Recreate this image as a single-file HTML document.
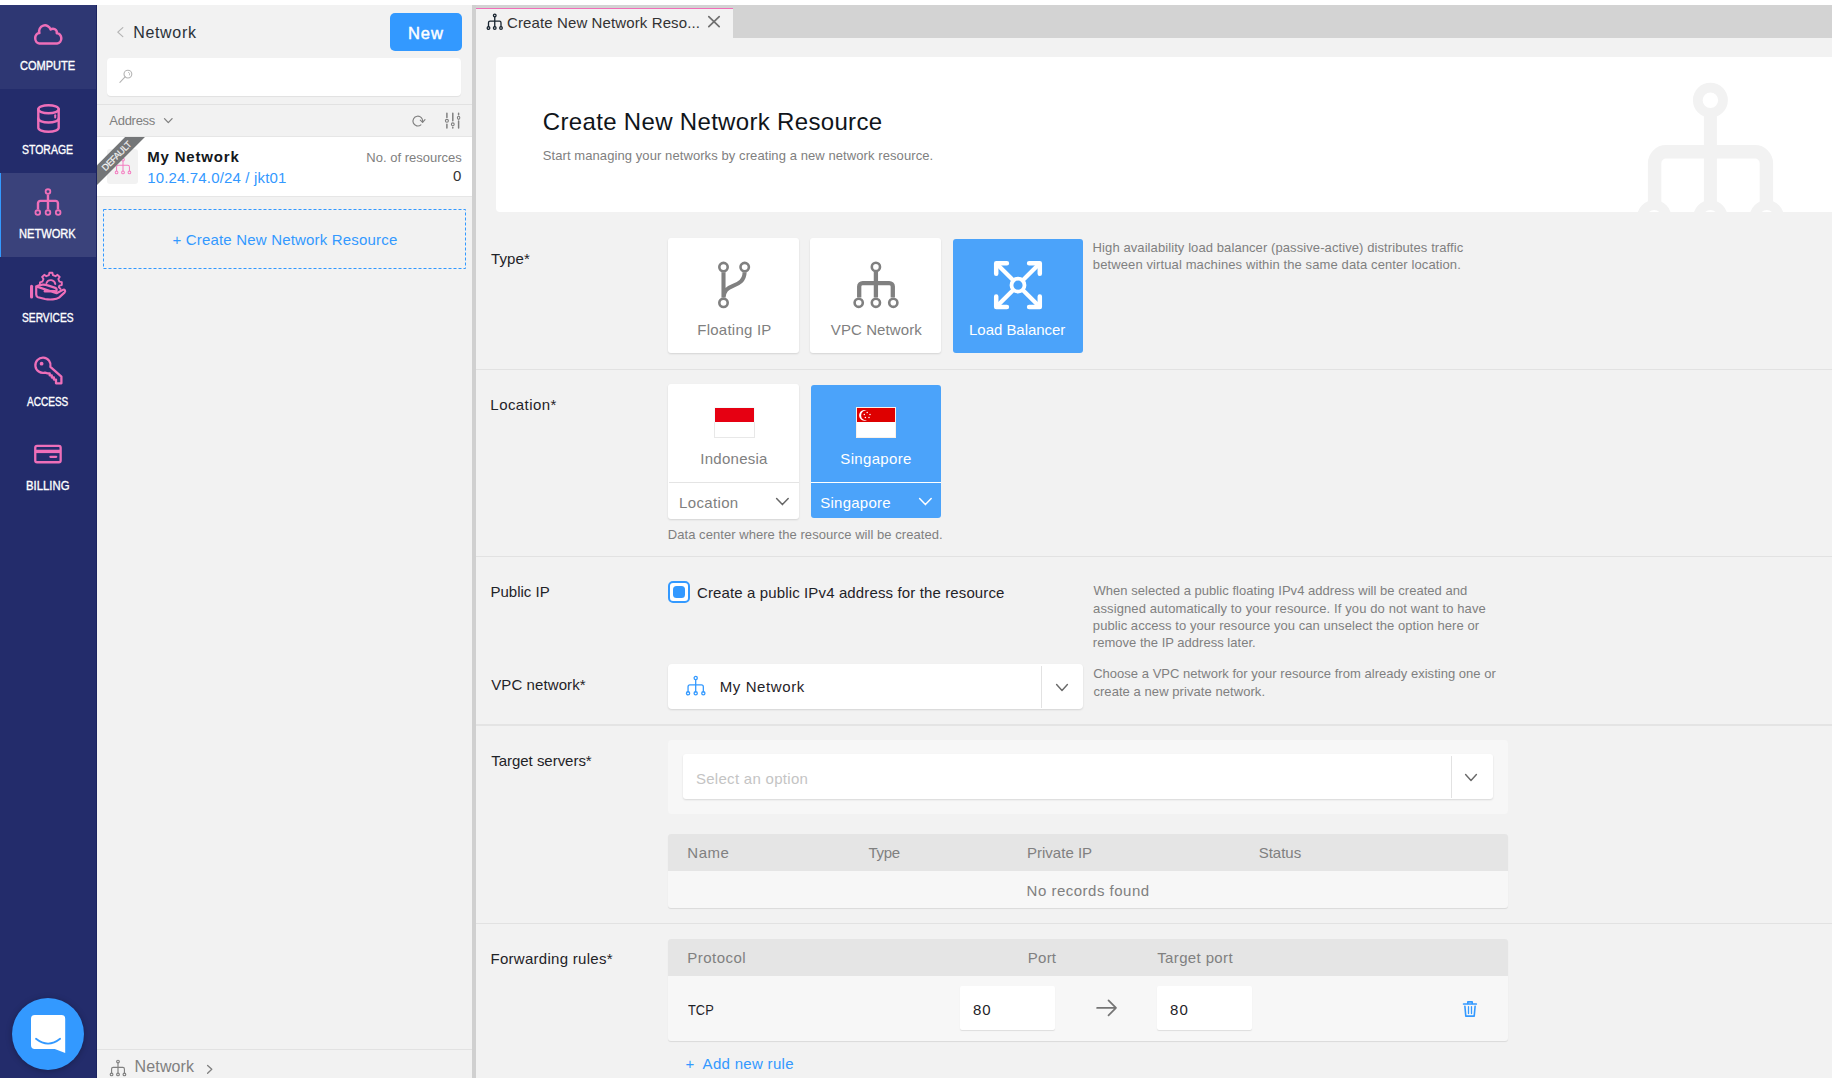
<!DOCTYPE html>
<html lang="en"><head><meta charset="utf-8"><title>Create New Network Resource</title>
<style>
html,body{margin:0;padding:0}
body{width:1832px;height:1078px;overflow:hidden;position:relative;background:#f2f2f2;font-family:"Liberation Sans",sans-serif;}
.a{position:absolute}
.t{position:absolute;white-space:nowrap;line-height:1;margin:0;padding:0}
.sep{position:absolute;left:476px;width:1356px;height:1px;background:#e2e2e2}
.card{position:absolute;background:#fff;border-radius:3px;box-shadow:0 1px 2px rgba(0,0,0,.13)}
.sel{position:absolute;background:#4ba3fa;border-radius:3px}
svg{position:absolute;overflow:visible}
.pk{fill:none;stroke:#ee6fb9;stroke-linecap:round;stroke-linejoin:round}
.gy{fill:none;stroke:#808080;stroke-linecap:round;stroke-linejoin:round}
</style></head><body>

<!-- top strip -->
<div class="a" style="left:0;top:0;width:1832px;height:5px;background:#fff"></div>

<!-- ================= SIDEBAR ================= -->
<div class="a" style="left:0;top:5px;width:97px;height:1073px;background:#232c6b"></div>
<div class="a" style="left:0;top:5px;width:97px;height:84px;background:#2e3773"></div>
<div class="a" style="left:0;top:173px;width:97px;height:84px;background:#3a427b"></div>
<div class="a" style="left:0;top:173px;width:1px;height:84px;background:#3399ff"></div>
<div class="a" style="left:96px;top:5px;width:1px;height:1073px;background:#1b2360"></div>

<!-- cloud -->
<svg class="pk" style="left:0;top:0" width="1" height="1" stroke-width="2.5">
<path d="M39.2 43.4A4.1 5.2 0 0 1 39.4 33A5.7 5.7 0 0 1 50.6 29.5A3.9 3.9 0 0 1 56.8 33.2A4.3 5.1 0 0 1 57.2 43.4Z"/>
</svg>
<!-- storage -->
<svg class="pk" style="left:37px;top:103.8px" width="23" height="29" viewBox="0 0 23 29" stroke-width="2.4">
<ellipse cx="11.5" cy="5.2" rx="10.2" ry="4"/>
<path d="M1.3 5.2V23.8A10.2 4 0 0 0 21.7 23.8V5.2"/>
<path d="M1.3 14.5A10.2 4 0 0 0 21.7 14.5"/>
<path d="M18.2 11.2V13.4" stroke-width="2"/>
</svg>
<!-- network -->
<svg class="pk" style="left:0;top:0" width="1" height="1" stroke-width="1.8">
<circle cx="47.97" cy="191.6" r="2.35"/><circle cx="37.8" cy="212.6" r="2.35"/><circle cx="47.97" cy="212.6" r="2.35"/><circle cx="58.15" cy="212.6" r="2.35"/>
<path d="M47.97 194.6V209.6M38 209.6V203.2a2.3 2.3 0 0 1 2.3-2.3H55.65a2.3 2.3 0 0 1 2.3 2.3V209.6" stroke-width="2.4" stroke-linecap="butt"/>
</svg>
<!-- services -->
<svg class="pk" style="left:0;top:0" width="1" height="1" stroke-width="2.2">
<path d="M31.55 286.3V296.9" stroke-width="3.1"/>
<path d="M36.2 286.4C39.5 284.6 44.5 284.3 48.5 285.6L54.6 287.6C57.6 288.6 57.2 291.6 54.4 291.5L44.6 291.3M45 290.8L54.5 291.2M56.6 293.2L62.6 290C64.8 289 66 291 64.4 292.6L59 297.6C56.4 299.4 50 300 45 299L38 297.2C36.6 296.8 36.2 296 36.2 294.6V286.4Z"/>
<path d="M39.9 283.8L40.0 282.3L42.4 281.6L43.5 279.0L42.1 277.0L44.3 274.8L46.3 276.2L48.9 275.1L49.4 272.7L52.4 272.7L52.9 275.1L55.5 276.2L57.5 274.8L59.7 277.0L58.3 279.0L59.4 281.6L61.8 282.1L61.8 285.1L59.4 285.6L58.8 287.1L60.5 288.9" stroke-width="1.9" stroke-linejoin="round"/>
<path d="M46.5 283A4.6 4.6 0 0 1 55.3 284" stroke-width="1.9"/>
</svg>
<!-- access key -->
<svg class="pk" style="left:0;top:0" width="1" height="1" stroke-width="2.3" stroke-linejoin="miter">
<path d="M50.4 366.9A7.6 7.6 0 1 0 45 372.6L47.6 373.3H49.7V375.4H51.8V377.5H53.9V379.6H56V383.3H61.4V376.6Z"/>
<circle cx="41.6" cy="363.7" r="1.9" fill="#ee6fb9" stroke="none"/>
</svg>
<!-- billing -->
<svg class="pk" style="left:0;top:0" width="1" height="1" stroke-width="2.3">
<rect x="35.25" y="445.85" width="25.4" height="16.4" rx="1.8"/>
<path d="M35.25 451.4H60.65" stroke-width="3.4" stroke-linecap="butt"/>
<path d="M50.4 456.8H56.2" stroke-width="2.3"/>
</svg>
<!-- chat bubble -->
<div class="a" style="left:12.1px;top:997.9px;width:72px;height:72px;border-radius:50%;background:#3399ff;box-shadow:0 1px 6px rgba(0,0,0,.28)"></div>
<svg style="left:30.9px;top:1014.9px" width="35" height="39" viewBox="0 0 35 39">
<path d="M3.7 0H30.5A3.7 3.7 0 0 1 34.2 3.7V38L23.8 33.9H3.7A3.7 3.7 0 0 1 0 30.2V3.7A3.7 3.7 0 0 1 3.7 0Z" fill="#fff"/>
<path d="M5 23.8Q17.05 33.4 29.1 23.8" fill="none" stroke="#3399ff" stroke-width="1.8" stroke-linecap="round"/>
</svg>

<!-- ================= LIST PANEL ================= -->
<!-- back chevron -->
<svg class="gy" style="left:0;top:0;stroke:#b4b4b4" width="1" height="1" stroke-width="1.25"><path d="M122.8 27.6L117.8 32.1L122.8 36.6"/></svg>
<!-- New button -->
<div class="a" style="left:390px;top:13px;width:72px;height:38px;border-radius:5px;background:#3399ff"></div>
<!-- search box -->
<div class="a" style="left:107px;top:58px;width:354px;height:38px;border-radius:4px;background:#fff;box-shadow:0 1px 1px rgba(0,0,0,.07)"></div>
<svg class="gy" style="left:118.5px;top:68.8px;stroke:#b4b4b4" width="14" height="14" viewBox="0 0 14 14" stroke-width="1.1">
<circle cx="8.9" cy="5.1" r="3.9"/><path d="M6.1 7.9L0.9 13.3"/><path d="M9.4 3.2A2.1 2.1 0 0 1 10.6 6" stroke-width="0.8"/>
</svg>
<div class="a" style="left:97px;top:104px;width:375px;height:1px;background:#e2e2e2"></div>
<!-- address chevron -->
<svg class="gy" style="left:164.2px;top:118.2px" width="9" height="6" viewBox="0 0 9 6" stroke-width="1.3"><path d="M0.5 0.6L4.3 4.6L8.1 0.6"/></svg>
<!-- refresh -->
<svg class="gy" style="left:0;top:0" width="1" height="1" stroke-width="1.15">
<path d="M420.9 124.9A4.9 4.9 0 1 1 422.7 121.7"/><path d="M420.3 120.1L422.6 122.4L425 119.6"/>
</svg>
<!-- filter sliders -->
<svg class="gy" style="left:0;top:0" width="1" height="1" stroke-width="1.5" stroke-linecap="butt">
<path d="M446.9 113.2V117.5M446.9 124.2V127.9M452.8 113.2V120.7M452.8 127.3V127.9M458.6 113.2V114.7M458.6 121V127.9"/>
<ellipse cx="446.9" cy="120.8" rx="1.5" ry="1.4" stroke-width="1.1"/><ellipse cx="452.8" cy="124.3" rx="1.4" ry="1.4" stroke-width="1.1"/><ellipse cx="458.6" cy="117.8" rx="1.2" ry="1.6" stroke-width="1.1"/>
</svg>
<!-- list item -->
<div class="a" style="left:97px;top:136px;width:375px;height:61px;background:#e6e6e6"></div>
<div class="a" style="left:97px;top:137px;width:375px;height:59px;background:#fff;overflow:hidden">
  <div class="a" style="left:10px;top:12px;width:31px;height:35px;border-radius:3px;background:#f2f2f2"></div>
  <svg class="pk" style="left:16.6px;top:20.2px;stroke:#f47cc0" width="18" height="18" viewBox="0 0 28 28" stroke-width="1.6"><circle cx="14" cy="4" r="2.1"/><path d="M14 6.1V21.9M4 21.9V15.5a2.5 2.5 0 0 1 2.5-2.5H21.5a2.5 2.5 0 0 1 2.5 2.5V21.9"/><circle cx="4" cy="24" r="2.1"/><circle cx="14" cy="24" r="2.1"/><circle cx="24" cy="24" r="2.1"/></svg>
  <div class="a" style="left:-36.1px;top:11.9px;width:110px;height:13.8px;background:#747678;transform:rotate(-45deg);transform-origin:50% 50%"></div>
  <div class="t" style="left:-35.1px;top:14.9px;width:110px;text-align:center;font-size:9.2px;color:#f4f4f4;letter-spacing:-0.5px;-webkit-text-stroke:0.2px #f4f4f4;transform:rotate(-45deg);transform-origin:50% 50%">DEFAULT</div>
</div>
<!-- dashed create box -->
<svg style="left:103px;top:209px" width="363" height="60" viewBox="0 0 363 60"><rect x="0.5" y="0.5" width="362" height="59" fill="none" stroke="#3399ff" stroke-width="1" stroke-dasharray="3 2"/></svg>
<!-- bottom breadcrumb -->
<div class="a" style="left:97px;top:1049px;width:375px;height:1px;background:#e2e2e2"></div>
<svg class="gy" style="left:109px;top:1059.3px" width="18" height="18" viewBox="0 0 28 28" stroke-width="1.8"><circle cx="14" cy="4" r="2.1"/><path d="M14 6.1V21.9M4 21.9V15.5a2.5 2.5 0 0 1 2.5-2.5H21.5a2.5 2.5 0 0 1 2.5 2.5V21.9"/><circle cx="4" cy="24" r="2.1"/><circle cx="14" cy="24" r="2.1"/><circle cx="24" cy="24" r="2.1"/></svg>
<svg class="gy" style="left:207px;top:1064.6px" width="6" height="9" viewBox="0 0 6 9" stroke-width="1.3"><path d="M0.6 0.5L4.8 4.3L0.6 8.2"/></svg>

<!-- divider -->
<div class="a" style="left:472px;top:5px;width:4px;height:1073px;background:#d0d0d0"></div>

<!-- ================= MAIN ================= -->
<!-- tab bar -->
<div class="a" style="left:476px;top:5px;width:1356px;height:32.6px;background:#d3d3d3"></div>
<div class="a" style="left:476px;top:8px;width:257px;height:30px;background:#f2f2f2;border-top:1px solid #f06eb8;box-sizing:border-box"></div>
<svg class="gy" style="left:485.8px;top:12.6px;stroke:#18242f" width="17.5" height="17.5" viewBox="0 0 28 28" stroke-width="2.1"><circle cx="14" cy="4" r="2.1"/><path d="M14 6.1V21.9M4 21.9V15.5a2.5 2.5 0 0 1 2.5-2.5H21.5a2.5 2.5 0 0 1 2.5 2.5V21.9"/><circle cx="4" cy="24" r="2.1"/><circle cx="14" cy="24" r="2.1"/><circle cx="24" cy="24" r="2.1"/></svg>
<svg class="gy" style="left:708.4px;top:16.2px;stroke:#707070" width="12" height="11" viewBox="0 0 12 11" stroke-width="1.7"><path d="M0.8 0.6L11.2 10.6M11.2 0.6L0.8 10.6"/></svg>

<!-- header card -->
<div class="a" style="left:496px;top:57px;width:1336px;height:155px;background:#fff;border-radius:4px 0 0 4px;overflow:hidden">
<svg style="left:0;top:0" width="1336" height="155" viewBox="496 57 1336 155" fill="none" stroke="#f2f2f2">
<circle cx="1710.4" cy="100.2" r="12.6" stroke-width="9.7"/>
<path d="M1710.4 112.5V205" stroke-width="13"/>
<path d="M1654.6 205V163.2A11.4 11.4 0 0 1 1666 151.8H1755A11.4 11.4 0 0 1 1766.4 163.2V205" stroke-width="13.4"/>
<circle cx="1654.2" cy="217.5" r="12.4" stroke-width="9.7"/>
<circle cx="1710.4" cy="217.5" r="12.4" stroke-width="9.7"/>
<circle cx="1766.8" cy="217.5" r="12.4" stroke-width="9.7"/>
</svg>
</div>

<!-- separators -->
<div class="sep" style="top:369px"></div>
<div class="sep" style="top:556px"></div>
<div class="sep" style="top:724px;height:2px;background:#e4e4e4"></div>
<div class="sep" style="top:923px"></div>

<!-- type cards -->
<div class="card" style="left:668px;top:238px;width:131px;height:115px"></div>
<div class="card" style="left:810px;top:238px;width:131px;height:115px"></div>
<div class="sel" style="left:953px;top:239px;width:130px;height:113.5px"></div>
<!-- floating ip icon -->
<svg class="gy" style="left:0;top:0" width="1" height="1" stroke-width="2.6">
<circle cx="723.5" cy="267.1" r="4.2"/><circle cx="744.7" cy="267.1" r="4.2"/><circle cx="723.5" cy="302.8" r="4.2"/>
<path d="M723.5 272.3V297.6M744.6 272.3C744.4 280.6 739 283.6 733 285.9S724.3 290.6 723.6 297" stroke-width="4.1" stroke-linecap="butt"/>
</svg>
<!-- vpc icon -->
<svg class="gy" style="left:0;top:0" width="1" height="1" stroke-width="2.6">
<circle cx="875.9" cy="266.9" r="4.1"/>
<circle cx="858.7" cy="302.8" r="4.1"/><circle cx="875.9" cy="302.8" r="4.1"/><circle cx="893.3" cy="302.8" r="4.1"/>
<path d="M875.9 272V297.6M859.2 297.6V286.6A3.5 3.5 0 0 1 862.7 283.1H889.3A3.5 3.5 0 0 1 892.8 286.6V297.6" stroke-width="4.3" stroke-linecap="butt"/>
</svg>
<!-- load balancer icon -->
<svg style="left:0;top:0" width="1" height="1" fill="none" stroke="#fff" stroke-width="4.5" stroke-linecap="round" stroke-linejoin="round">
<circle cx="1018" cy="285.15" r="6.5" stroke-width="3.8"/>
<path d="M996.2 273.8V263.3H1006.9M1029.1 263.3H1039.8V273.8M1039.8 296.5V307H1029.1M1006.9 307H996.2V296.5"/>
<path d="M996.6 263.7L1013.2 280.3M1039.4 263.7L1022.8 280.3M1039.4 306.6L1022.8 290M996.6 306.6L1013.2 290" stroke-width="4.2" stroke-linecap="butt"/>
</svg>

<!-- location cards -->
<div class="card" style="left:668px;top:384px;width:131px;height:135px"></div>
<div class="a" style="left:669px;top:482px;width:130px;height:1px;background:#e4e4e4"></div>
<div class="sel" style="left:811px;top:385px;width:130px;height:133.4px"></div>
<div class="a" style="left:811px;top:481.5px;width:130px;height:1px;background:#fff"></div>
<!-- indonesia flag -->
<div class="a" style="left:714px;top:407px;width:41px;height:31px;background:#fff;box-shadow:inset 0 0 0 1px #e8e8e8"></div>
<div class="a" style="left:714px;top:407px;width:41px;height:15.4px;background:#f4fbfb"></div>
<div class="a" style="left:715px;top:408px;width:39px;height:14.4px;background:#e60012"></div>
<!-- singapore flag -->
<div class="a" style="left:856px;top:407px;width:40px;height:31px;background:#fff;box-shadow:inset 0 0 0 1px #fbf1e8"></div>
<div class="a" style="left:857px;top:408px;width:38px;height:14.4px;background:#de0000"></div>
<svg style="left:0;top:0" width="1" height="1">
<path d="M867 410.6A5.4 5.4 0 1 0 867 420.2A4.9 4.9 0 1 1 867 410.6Z" fill="#fff"/>
<g fill="#fff"><circle cx="867.2" cy="412.4" r="0.75"/><circle cx="864.3" cy="414.5" r="0.75"/><circle cx="870" cy="414.5" r="0.75"/><circle cx="865.4" cy="417.6" r="0.75"/><circle cx="869" cy="417.6" r="0.75"/></g>
</svg>
<svg class="gy" style="left:776px;top:498px;stroke:#666" width="13" height="8" viewBox="0 0 13 8" stroke-width="1.5"><path d="M0.6 0.6L6.4 6.6L12.2 0.6"/></svg>
<svg class="gy" style="left:918.6px;top:498px;stroke:#fff" width="13" height="8" viewBox="0 0 13 8" stroke-width="1.5"><path d="M0.6 0.6L6.4 6.6L12.2 0.6"/></svg>

<!-- checkbox -->
<div class="a" style="left:668px;top:581px;width:22px;height:22px;box-sizing:border-box;border:2px solid #3399ff;border-radius:5px;background:#fff"></div>
<div class="a" style="left:673px;top:586px;width:12px;height:12px;border-radius:3.5px;background:#3399ff"></div>

<!-- vpc dropdown -->
<div class="card" style="left:668px;top:664px;width:415px;height:45px;border-radius:4px"></div>
<div class="a" style="left:1041px;top:666px;width:1px;height:42px;background:#e2e2e2"></div>
<svg class="gy" style="left:684.9px;top:675.2px;stroke:#3399ff" width="21.4" height="21.4" viewBox="0 0 28 28" stroke-width="1.7"><circle cx="14" cy="4" r="2.1"/><path d="M14 6.1V21.9M4 21.9V15.5a2.5 2.5 0 0 1 2.5-2.5H21.5a2.5 2.5 0 0 1 2.5 2.5V21.9"/><circle cx="4" cy="24" r="2.1"/><circle cx="14" cy="24" r="2.1"/><circle cx="24" cy="24" r="2.1"/></svg>
<svg class="gy" style="left:1055.6px;top:684px;stroke:#6a6a6a" width="12" height="8" viewBox="0 0 12 8" stroke-width="1.45"><path d="M0.6 0.6L6 6.4L11.4 0.6"/></svg>

<!-- target servers -->
<div class="a" style="left:668px;top:740px;width:839.7px;height:73.5px;border-radius:4px;background:#f7f7f7"></div>
<div class="card" style="left:683px;top:754px;width:810.2px;height:45px"></div>
<div class="a" style="left:1451px;top:756px;width:1px;height:42px;background:#e2e2e2"></div>
<svg class="gy" style="left:1465.2px;top:774px;stroke:#6a6a6a" width="12" height="8" viewBox="0 0 12 8" stroke-width="1.45"><path d="M0.6 0.6L6 6.4L11.4 0.6"/></svg>
<div class="a" style="left:668px;top:834px;width:839.7px;height:74.2px;border-radius:3px;background:#f7f7f7;box-shadow:0 1px 1px rgba(0,0,0,.1)"></div>
<div class="a" style="left:668px;top:834px;width:839.7px;height:36.8px;border-radius:3px 3px 0 0;background:#e5e5e5"></div>

<!-- forwarding rules -->
<div class="a" style="left:668px;top:939px;width:839.7px;height:101.8px;border-radius:3px;background:#f7f7f7;box-shadow:0 1px 1px rgba(0,0,0,.1)"></div>
<div class="a" style="left:668px;top:939px;width:839.7px;height:36.8px;border-radius:3px 3px 0 0;background:#e5e5e5"></div>
<div class="a" style="left:960px;top:986px;width:95px;height:43.5px;border-radius:2px;background:#fff;box-shadow:0 1px 1px rgba(0,0,0,.1)"></div>
<div class="a" style="left:1156.5px;top:986px;width:95px;height:43.5px;border-radius:2px;background:#fff;box-shadow:0 1px 1px rgba(0,0,0,.1)"></div>
<svg class="gy" style="left:0;top:0;stroke:#757575" width="1" height="1" stroke-width="1.7" stroke-linecap="butt" stroke-linejoin="miter"><path d="M1097.1 1007.9H1115.6M1108.5 1000.4L1116 1007.9L1108.5 1015.4"/></svg>
<!-- trash -->
<svg style="left:0;top:0" width="1" height="1" fill="none" stroke="#3399ff" stroke-linecap="round" stroke-linejoin="round">
<path d="M1463.6 1004H1476.3" stroke-width="1.7"/>
<path d="M1467.8 1003.4V1001.9H1472.2V1003.4" stroke-width="1.6"/>
<path d="M1464.9 1006.3L1465.8 1016.1H1474.2L1475.1 1006.3" stroke-width="1.6"/>
<path d="M1468.5 1006.6V1013.5M1471.5 1006.6V1013.5" stroke-width="1.3"/>
</svg>

<div class="t" style="left:20.36px;top:59.75px;font-size:12.5px;color:#ffffff;transform:scaleX(0.8831);transform-origin:0 0;-webkit-text-stroke:0.35px #ffffff;">COMPUTE</div>
<div class="t" style="left:22.02px;top:143.75px;font-size:12.5px;color:#ffffff;transform:scaleX(0.8382);transform-origin:0 0;-webkit-text-stroke:0.35px #ffffff;">STORAGE</div>
<div class="t" style="left:19.46px;top:227.75px;font-size:12.5px;color:#ffffff;transform:scaleX(0.8882);transform-origin:0 0;-webkit-text-stroke:0.35px #ffffff;">NETWORK</div>
<div class="t" style="left:22.20px;top:311.75px;font-size:12.5px;color:#ffffff;transform:scaleX(0.8178);transform-origin:0 0;-webkit-text-stroke:0.35px #ffffff;">SERVICES</div>
<div class="t" style="left:26.80px;top:395.75px;font-size:12.5px;color:#ffffff;transform:scaleX(0.8035);transform-origin:0 0;-webkit-text-stroke:0.35px #ffffff;">ACCESS</div>
<div class="t" style="left:26.38px;top:479.75px;font-size:12.5px;color:#ffffff;transform:scaleX(0.9064);transform-origin:0 0;-webkit-text-stroke:0.35px #ffffff;">BILLING</div>
<div class="t" style="left:133.15px;top:25.00px;font-size:16px;color:#2a3138;letter-spacing:0.684px;">Network</div>
<div class="t" style="left:407.95px;top:25.00px;font-size:16.5px;color:#ffffff;letter-spacing:0.950px;-webkit-text-stroke:0.45px #ffffff;">New</div>
<div class="t" style="left:109.36px;top:114.00px;font-size:13px;color:#808080;letter-spacing:-0.296px;">Address</div>
<div class="t" style="left:147.31px;top:148.90px;font-size:15px;color:#14181c;font-weight:700;letter-spacing:0.806px;">My Network</div>
<div class="t" style="left:147.17px;top:169.50px;font-size:15px;color:#3399ff;letter-spacing:0.162px;">10.24.74.0/24 / jkt01</div>
<div class="t" style="left:366.36px;top:150.50px;font-size:13px;color:#808080;letter-spacing:0.006px;">No. of resources</div>
<div class="t" style="left:452.99px;top:167.60px;font-size:15px;color:#333333;">0</div>
<div class="t" style="left:172.47px;top:231.75px;font-size:15px;color:#3399ff;letter-spacing:0.182px;">+ Create New Network Resource</div>
<div class="t" style="left:134.55px;top:1059.00px;font-size:16px;color:#808080;letter-spacing:0.145px;">Network</div>
<div class="t" style="left:506.97px;top:14.50px;font-size:15px;color:#333333;letter-spacing:0.116px;">Create New Network Reso...</div>
<div class="t" style="left:542.84px;top:110.00px;font-size:24px;color:#10151a;letter-spacing:0.326px;">Create New Network Resource</div>
<div class="t" style="left:542.74px;top:149.00px;font-size:13px;color:#808080;letter-spacing:0.084px;">Start managing your networks by creating a new network resource.</div>
<div class="t" style="left:491.00px;top:251.00px;font-size:15px;color:#1f2328;letter-spacing:0.098px;">Type*</div>
<div class="t" style="left:490.37px;top:397.00px;font-size:15px;color:#1f2328;letter-spacing:0.424px;">Location*</div>
<div class="t" style="left:490.52px;top:584.00px;font-size:15px;color:#1f2328;">Public IP</div>
<div class="t" style="left:491.26px;top:677.00px;font-size:15px;color:#1f2328;letter-spacing:0.089px;">VPC network*</div>
<div class="t" style="left:491.24px;top:753.00px;font-size:15px;color:#1f2328;letter-spacing:-0.030px;">Target servers*</div>
<div class="t" style="left:490.49px;top:951.00px;font-size:15px;color:#1f2328;letter-spacing:0.285px;">Forwarding rules*</div>
<div class="t" style="left:697.32px;top:322.00px;font-size:15px;color:#808080;letter-spacing:0.235px;">Floating IP</div>
<div class="t" style="left:830.82px;top:322.00px;font-size:15px;color:#808080;letter-spacing:0.088px;">VPC Network</div>
<div class="t" style="left:969.02px;top:322.00px;font-size:15px;color:#ffffff;letter-spacing:-0.033px;">Load Balancer</div>
<div class="t" style="left:1092.62px;top:241.00px;font-size:13px;color:#808080;letter-spacing:0.089px;">High availability load balancer (passive-active) distributes traffic</div>
<div class="t" style="left:1092.87px;top:258.00px;font-size:13px;color:#808080;letter-spacing:0.109px;">between virtual machines within the same data center location.</div>
<div class="t" style="left:700.35px;top:451.00px;font-size:15px;color:#808080;letter-spacing:0.258px;">Indonesia</div>
<div class="t" style="left:840.31px;top:451.00px;font-size:15px;color:#ffffff;letter-spacing:0.327px;">Singapore</div>
<div class="t" style="left:679.00px;top:495.00px;font-size:15px;color:#808080;letter-spacing:0.357px;">Location</div>
<div class="t" style="left:820.31px;top:495.00px;font-size:15px;color:#ffffff;letter-spacing:0.232px;">Singapore</div>
<div class="t" style="left:667.79px;top:528.00px;font-size:13px;color:#808080;letter-spacing:0.053px;">Data center where the resource will be created.</div>
<div class="t" style="left:696.98px;top:585.00px;font-size:15px;color:#1f2328;letter-spacing:0.128px;">Create a public IPv4 address for the resource</div>
<div class="t" style="left:1093.52px;top:584.00px;font-size:13px;color:#808080;letter-spacing:0.037px;">When selected a public floating IPv4 address will be created and</div>
<div class="t" style="left:1093.12px;top:602.00px;font-size:13px;color:#808080;letter-spacing:0.113px;">assigned automatically to your resource. If you do not want to have</div>
<div class="t" style="left:1092.87px;top:619.00px;font-size:13px;color:#808080;letter-spacing:0.060px;">public access to your resource you can unselect the option here or</div>
<div class="t" style="left:1092.82px;top:636.00px;font-size:13px;color:#808080;letter-spacing:0.017px;">remove the IP address later.</div>
<div class="t" style="left:719.71px;top:679.00px;font-size:15px;color:#1f2328;letter-spacing:0.593px;">My Network</div>
<div class="t" style="left:1093.15px;top:667.00px;font-size:13px;color:#808080;letter-spacing:0.025px;">Choose a VPC network for your resource from already existing one or</div>
<div class="t" style="left:1093.39px;top:685.00px;font-size:13px;color:#808080;letter-spacing:0.066px;">create a new private network.</div>
<div class="t" style="left:695.89px;top:771.00px;font-size:15px;color:#c4c4c4;letter-spacing:0.296px;">Select an option</div>
<div class="t" style="left:687.34px;top:845.00px;font-size:15px;color:#808080;letter-spacing:0.474px;">Name</div>
<div class="t" style="left:868.60px;top:845.00px;font-size:15px;color:#808080;letter-spacing:-0.316px;">Type</div>
<div class="t" style="left:1027.00px;top:845.00px;font-size:15px;color:#808080;letter-spacing:0.009px;">Private IP</div>
<div class="t" style="left:1258.75px;top:845.00px;font-size:15px;color:#808080;letter-spacing:-0.029px;">Status</div>
<div class="t" style="left:1026.56px;top:883.00px;font-size:15px;color:#808080;letter-spacing:0.499px;">No records found</div>
<div class="t" style="left:687.25px;top:950.00px;font-size:15px;color:#808080;letter-spacing:0.474px;">Protocol</div>
<div class="t" style="left:1027.82px;top:950.00px;font-size:15px;color:#808080;letter-spacing:0.237px;">Port</div>
<div class="t" style="left:1157.22px;top:950.00px;font-size:15px;color:#808080;letter-spacing:0.367px;">Target port</div>
<div class="t" style="left:688.33px;top:1002.00px;font-size:15px;color:#1f2328;transform:scaleX(0.8569);transform-origin:0 0;">TCP</div>
<div class="t" style="left:972.98px;top:1002.00px;font-size:15px;color:#1f2328;letter-spacing:1.039px;">80</div>
<div class="t" style="left:1169.98px;top:1002.00px;font-size:15px;color:#1f2328;letter-spacing:1.199px;">80</div>
<div class="t" style="left:685.38px;top:1056.00px;font-size:15px;color:#3399ff;">+</div>
<div class="t" style="left:702.62px;top:1056.00px;font-size:15px;color:#3399ff;letter-spacing:0.304px;">Add new rule</div>
</body></html>
